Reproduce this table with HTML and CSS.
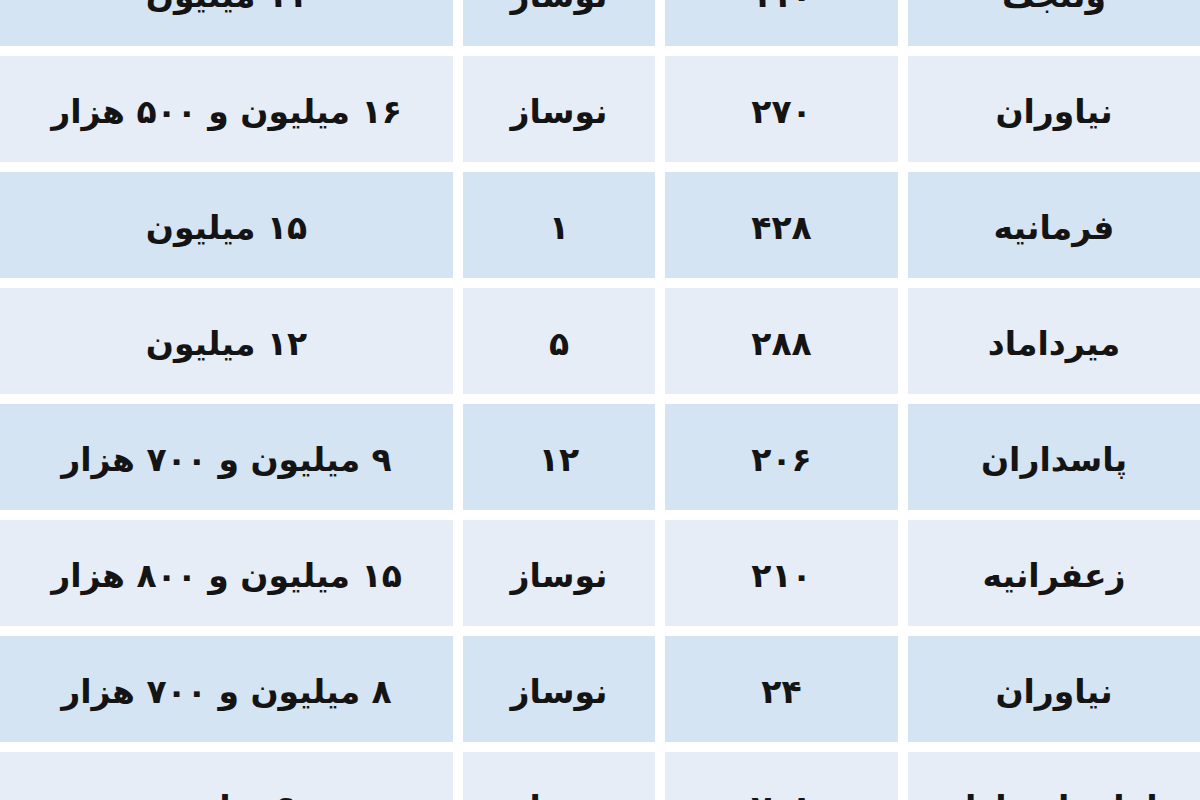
FILE: index.html
```html
<!DOCTYPE html>
<html lang="fa" dir="rtl">
<head>
<meta charset="utf-8">
<title>جدول قیمت</title>
<link rel="stylesheet" href="styles.css">
</head>
<body>
<div class="frame">
  <div class="table">
    <div class="row dark"><div class="cell">ولنجک</div><div class="cell">۱۱۰</div><div class="cell">نوساز</div><div class="cell">۱۱ میلیون</div></div>
    <div class="row light"><div class="cell">نیاوران</div><div class="cell">۲۷۰</div><div class="cell">نوساز</div><div class="cell">۱۶ میلیون و ۵۰۰ هزار</div></div>
    <div class="row dark"><div class="cell">فرمانیه</div><div class="cell">۴۲۸</div><div class="cell">۱</div><div class="cell">۱۵ میلیون</div></div>
    <div class="row light"><div class="cell">میرداماد</div><div class="cell">۲۸۸</div><div class="cell">۵</div><div class="cell">۱۲ میلیون</div></div>
    <div class="row dark"><div class="cell">پاسداران</div><div class="cell">۲۰۶</div><div class="cell">۱۲</div><div class="cell">۹ میلیون و ۷۰۰ هزار</div></div>
    <div class="row light"><div class="cell">زعفرانیه</div><div class="cell">۲۱۰</div><div class="cell">نوساز</div><div class="cell">۱۵ میلیون و ۸۰۰ هزار</div></div>
    <div class="row dark"><div class="cell">نیاوران</div><div class="cell">۲۴</div><div class="cell">نوساز</div><div class="cell">۸ میلیون و ۷۰۰ هزار</div></div>
    <div class="row light"><div class="cell">بلوار پاسداران</div><div class="cell">۲۰۸</div><div class="cell">نوساز</div><div class="cell">۹ میلیون</div></div>
  </div>
</div>
</body>
</html>
```
FILE: styles.css
```css
html, body {
  margin: 0;
  padding: 0;
  background: #ffffff;
}
body {
  width: 1200px;
  height: 800px;
  overflow: hidden;
  font-family: "DejaVu Sans", sans-serif;
}
.frame {
  width: 1200px;
  height: 800px;
  overflow: hidden;
}
.table {
  margin-top: -60px;
  display: flex;
  flex-direction: column;
  gap: 10px;
  direction: rtl;
}
.row {
  display: grid;
  grid-template-columns: 292px 233px 192px 453px;
  column-gap: 10px;
  height: 106px;
}
.cell {
  display: flex;
  align-items: center;
  justify-content: center;
  padding-top: 4px;
  font-size: 33px;
  font-weight: bold;
  color: #141414;
  white-space: nowrap;
}
.dark .cell {
  background: #d5e4f2;
}
.light .cell {
  background: #e7edf6;
}
```
